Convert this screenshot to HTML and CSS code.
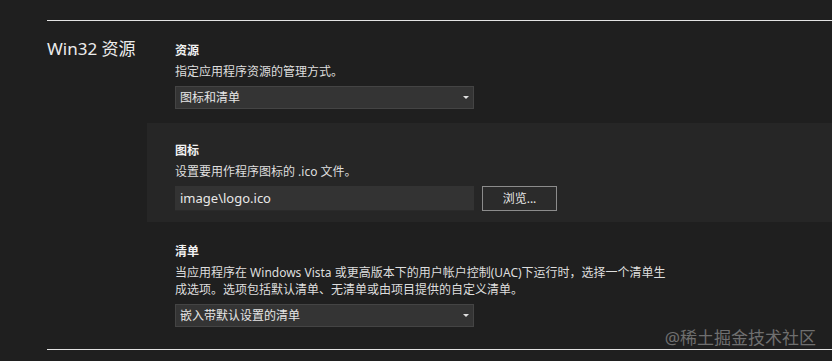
FILE: index.html
```html
<!DOCTYPE html>
<html>

<head>
    <meta charset="utf-8" />
    <meta name="viewport" content="width=device-width, initial-scale=1.0" />
    <link rel="stylesheet" href="styles.css">
</head>

<body>

    <div class="page">
        <div class="rule top-rule"></div>

        <!-- Win32 resources -->
        <div class="section">
            <div class="section-title">Win32 资源</div>

            <div class="section-body">
                <div class="group">
                    <div class="label">资源</div>
                    <div class="desc">指定应用程序资源的管理方式。</div>
                    <div class="select">
                        <span>图标和清单</span>
                        <span class="arrow"></span>
                    </div>
                </div>

                <div class="group group-active">
                    <div class="label">图标</div>
                    <div class="desc">设置要用作程序图标的 .ico 文件。</div>
                    <div class="field-row">
                        <div class="input">image\logo.ico</div>
                        <div class="button">浏览...</div>
                    </div>
                </div>

                <div class="group">
                    <div class="label">清单</div>
                    <div class="desc wide">当应用程序在 Windows Vista 或更高版本下的用户帐户控制(UAC)下运行时，选择一个清单生成选项。选项包括默认清单、无清单或由项目提供的自定义清单。</div>
                    <div class="select">
                        <span>嵌入带默认设置的清单</span>
                        <span class="arrow"></span>
                    </div>
                </div>
            </div>
        </div>

        <div class="rule bottom-rule"></div>
    </div>

    <div class="watermark">@稀土掘金技术社区</div>

</body>

</html>
```

FILE: styles.css
```css
html,
body {
    margin: 0;
    padding: 0;
    background: #1f1f1f;
    height: 100%;
    overflow: hidden;
}

body {
    font-family: "Noto Sans", "Noto Sans CJK SC", sans-serif;
    color: #e6e6e6;
    font-size: 12px;
}

.page {
    padding-top: 20px;
}

.rule {
    margin-left: 47px;
    height: 1px;
    background: #e4e4e4;
}

.section {
    display: flex;
    padding-top: 21px;
}

.section-title {
    width: 128px;
    padding-left: 47px;
    font-size: 17px;
    line-height: 24px;
    margin-top: -5px;
    color: #ececec;
    flex-shrink: 0;
}

.section-body {
    flex: 1;
}

.group {
    padding-bottom: 14px;
}

.group-active {
    background: #262626;
    margin-left: -28px;
    padding: 19px 0 11px 28px;
    margin-bottom: 21px;
}

.label {
    font-weight: bold;
    line-height: 17px;
    color: #f2f2f2;
    margin-bottom: 4px;
}

.desc {
    line-height: 17px;
    color: #dedede;
    margin-bottom: 6px;
}

.wide {
    width: 495px;
}

.select {
    width: 293px;
    height: 21px;
    line-height: 21px;
    background: #343434;
    border: 1px solid #444444;
    display: flex;
    align-items: center;
    justify-content: space-between;
    padding-left: 4px;
}

.arrow {
    width: 0;
    height: 0;
    border-left: 3px solid transparent;
    border-right: 3px solid transparent;
    border-top: 3px solid #e0e0e0;
    margin-right: 4px;
}

.field-row {
    display: flex;
    gap: 8px;
}

.input {
    width: 299px;
    height: 25px;
    line-height: 25px;
    padding-left: 5px;
    box-sizing: border-box;
    background: #333333;
    border-bottom: 1px solid #2a2a2a;
    font-size: 13px;
    color: #e8e8e8;
}

.button {
    width: 75px;
    height: 25px;
    line-height: 23px;
    box-sizing: border-box;
    border: 1px solid #8c8c8c;
    background: #2b2b2b;
    text-align: center;
    color: #e8e8e8;
}

.bottom-rule {
    margin-top: 8px;
}

.watermark {
    position: absolute;
    right: 16px;
    bottom: 12px;
    font-size: 17px;
    line-height: 22px;
    color: #6f6f6f;
}
```
